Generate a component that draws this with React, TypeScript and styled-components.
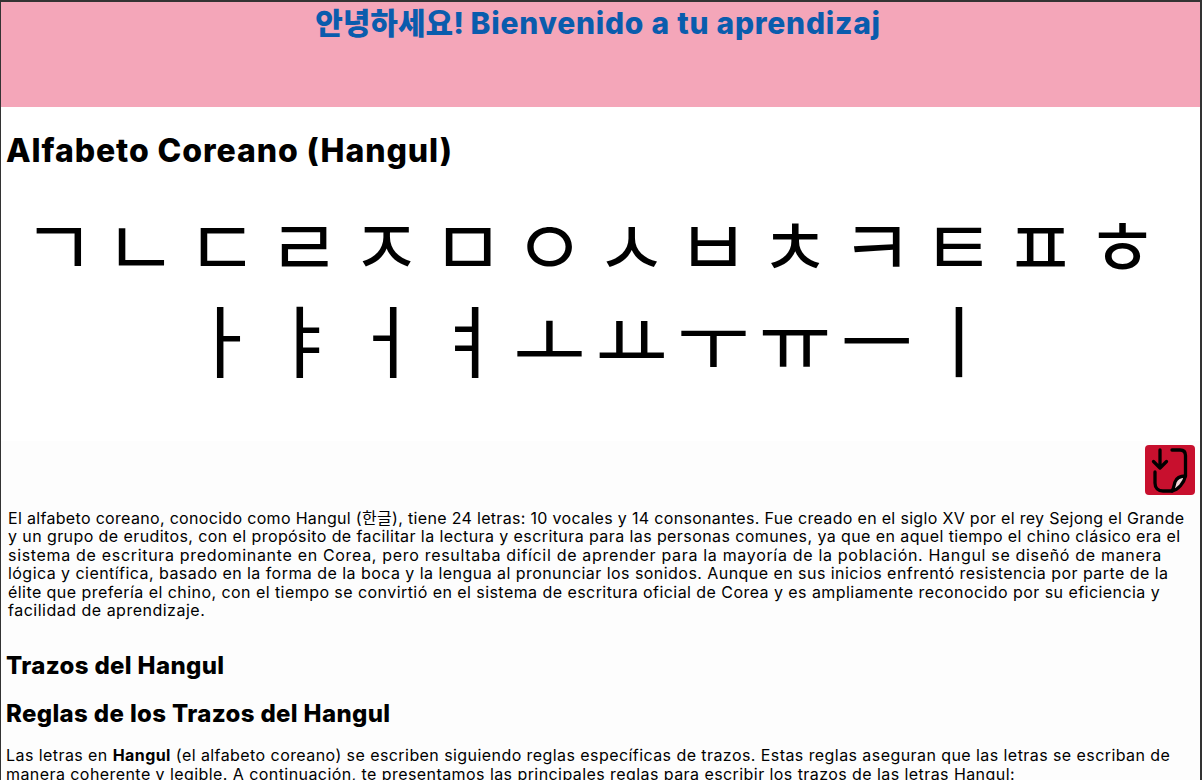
import React from 'react';
import styled, { createGlobalStyle } from 'styled-components';

const GlobalStyle = createGlobalStyle`
  html, body {
    margin: 0;
    padding: 0;
    height: 780px;
    overflow: hidden;
    background: #ffffff;
  }
  body {
    font-family: "Inter", "Noto Sans CJK KR", sans-serif;
    color: #000000;
  }
`;

const Page = styled.div`
  height: 780px;
  box-sizing: border-box;
  border: solid #333333;
  border-width: 2px 2px 0 1px;
  overflow: hidden;
  display: flex;
  flex-direction: column;
  background: #ffffff;
`;

const Header = styled.header`
  flex: none;
  height: 105px;
  padding-right: 5px;
  background: #f4a6b9;
  text-align: center;
`;

const HeaderTitle = styled.h1`
  margin: 0;
  font-size: 30px;
  line-height: 42px;
  font-weight: 800;
  color: #0a5cad;
  white-space: nowrap;
`;

const HeaderLatin = styled.span`
  letter-spacing: 0.75px;
`;

const SectionTitle = styled.h2`
  margin: 24px 0 0 5px;
  font-size: 32px;
  line-height: 40px;
  font-weight: 800;
  letter-spacing: 0.92px;
`;

const Letters = styled.div`
  margin-top: 24px;
  padding-right: 20px;
`;

const LetterRow = styled.div`
  display: flex;
  justify-content: center;
  font-family: "Noto Sans CJK KR", sans-serif;
  font-size: 79px;
  line-height: 95px;
`;

const Letter = styled.span`
  width: 81.8px;
  text-align: center;
`;

const Lower = styled.div`
  flex: 1;
  margin-top: 56px;
  padding-top: 4px;
  background: #fdfdfd;
`;

const ToolRow = styled.div`
  display: flex;
  justify-content: flex-end;
  padding-right: 5px;
`;

const DownloadButton = styled.button`
  width: 50px;
  height: 50px;
  padding: 0;
  border: none;
  border-radius: 4px;
  background: #c8102e;
  display: flex;
  align-items: center;
  justify-content: center;
`;

const Paragraph = styled.p`
  margin: 14px 6px 0 7px;
  font-size: 16px;
  line-height: 18.4px;
`;

const ParagraphLine = styled.span<{ $spacing: number }>`
  display: block;
  white-space: nowrap;
  letter-spacing: ${(p) => p.$spacing}px;
`;

const SubTitle = styled.h3<{ $top: number }>`
  margin: ${(p) => p.$top}px 0 0 5px;
  font-size: 24px;
  line-height: 32px;
  font-weight: 800;
  letter-spacing: 0.36px;
`;

const Intro = styled.p`
  margin: 16px 5px 0 5px;
  font-size: 16px;
  line-height: 18.4px;
  letter-spacing: 0.43px;
`;

const consonants = ['ㄱ', 'ㄴ', 'ㄷ', 'ㄹ', 'ㅈ', 'ㅁ', 'ㅇ', 'ㅅ', 'ㅂ', 'ㅊ', 'ㅋ', 'ㅌ', 'ㅍ', 'ㅎ'];
const vowels = ['ㅏ', 'ㅑ', 'ㅓ', 'ㅕ', 'ㅗ', 'ㅛ', 'ㅜ', 'ㅠ', 'ㅡ', 'ㅣ'];

const history = [
  { text: 'El alfabeto coreano, conocido como Hangul (한글), tiene 24 letras: 10 vocales y 14 consonantes. Fue creado en el siglo XV por el rey Sejong el Grande', spacing: 0.32 },
  { text: 'y un grupo de eruditos, con el propósito de facilitar la lectura y escritura para las personas comunes, ya que en aquel tiempo el chino clásico era el', spacing: 0.41 },
  { text: 'sistema de escritura predominante en Corea, pero resultaba difícil de aprender para la mayoría de la población. Hangul se diseñó de manera', spacing: 0.68 },
  { text: 'lógica y científica, basado en la forma de la boca y la lengua al pronunciar los sonidos. Aunque en sus inicios enfrentó resistencia por parte de la', spacing: 0.45 },
  { text: 'élite que prefería el chino, con el tiempo se convirtió en el sistema de escritura oficial de Corea y es ampliamente reconocido por su eficiencia y', spacing: 0.44 },
  { text: 'facilidad de aprendizaje.', spacing: 0.5 },
];

const App: React.FC = () => (
  <>
    <GlobalStyle />
    <Page>
      <Header>
        <HeaderTitle>
          안녕하세요! <HeaderLatin>Bienvenido a tu aprendizaj</HeaderLatin>
        </HeaderTitle>
      </Header>
      <SectionTitle>Alfabeto Coreano (Hangul)</SectionTitle>
      <Letters>
        <LetterRow>{consonants.map((c) => <Letter key={c}>{c}</Letter>)}</LetterRow>
        <LetterRow>{vowels.map((c) => <Letter key={c}>{c}</Letter>)}</LetterRow>
      </Letters>
      <Lower>
        <ToolRow>
          <DownloadButton aria-label="descargar">
            <svg width="50" height="50" viewBox="0 0 50 50" fill="none" stroke="#000" strokeWidth="3.3" strokeLinecap="round" strokeLinejoin="round">
              <path d="M15 5v18M8.500 16.500 15 23l6.500-6.500" />
              <path d="M27 5h8c3.500 0 5.500 2 5.500 5.500V31" />
              <path d="M10 27v11c0 5 3 8 8 8h9" />
              <path d="M27 46c6-1 12-8 13.500-15-5 0-9 2-10.500 6-1 3-1 6-3 9z" fill="#f3d6da" />
            </svg>
          </DownloadButton>
        </ToolRow>
        <Paragraph>
          {history.map((line) => (
            <ParagraphLine key={line.text} $spacing={line.spacing}>{line.text}</ParagraphLine>
          ))}
        </Paragraph>
        <SubTitle $top={31}>Trazos del Hangul</SubTitle>
        <SubTitle $top={16}>Reglas de los Trazos del Hangul</SubTitle>
        <Intro>
          Las letras en <strong>Hangul</strong> (el alfabeto coreano) se escriben siguiendo reglas específicas de trazos. Estas reglas aseguran que las letras se escriban de manera coherente y legible. A continuación, te presentamos las principales reglas para escribir los trazos de las letras Hangul:
        </Intro>
      </Lower>
    </Page>
  </>
);

export default App;
